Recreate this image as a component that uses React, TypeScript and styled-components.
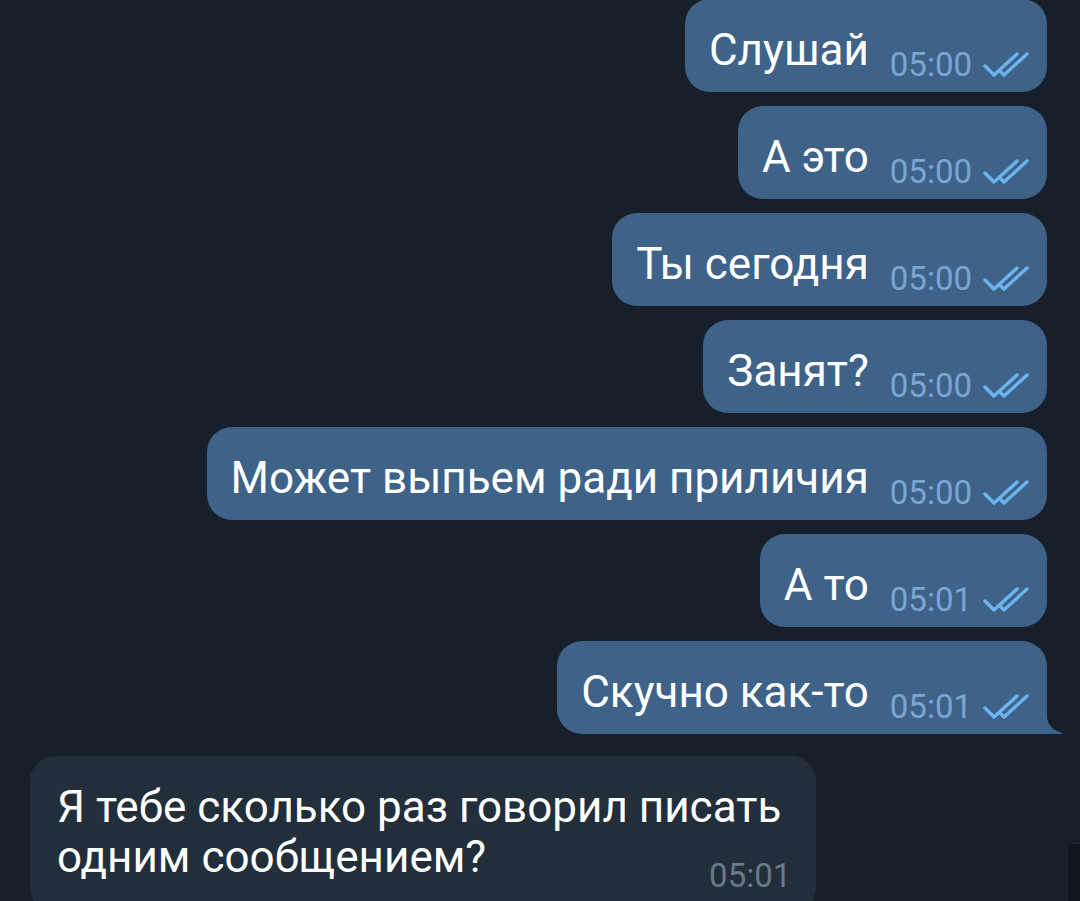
import * as React from 'react'
import styled, { createGlobalStyle } from 'styled-components'

const GlobalStyle = createGlobalStyle`
  html, body {
    margin: 0;
    padding: 0;
    background: #17202a;
  }
  body {
    font-family: Roboto, 'Noto Sans', sans-serif;
  }
`

type Msg = { text: string; time: string }

const outgoing: Msg[] = [
  { text: 'Слушай', time: '05:00' },
  { text: 'А это', time: '05:00' },
  { text: 'Ты сегодня', time: '05:00' },
  { text: 'Занят?', time: '05:00' },
  { text: 'Может выпьем ради приличия', time: '05:00' },
  { text: 'А то', time: '05:01' },
  { text: 'Скучно как-то', time: '05:01' },
]

const DoubleCheck = () => (
  <svg width="48" height="28" viewBox="0 0 48 28" fill="none">
    <polyline
      points="3,15 12,24 35,3"
      stroke="#6cb4ee"
      strokeWidth="3.4"
      strokeLinecap="round"
      strokeLinejoin="round"
    />
    <polyline
      points="18,20 22,24 45,3"
      stroke="#6cb4ee"
      strokeWidth="3.4"
      strokeLinecap="round"
      strokeLinejoin="round"
    />
  </svg>
)

const Tail = () => (
  <TailSvg width="17" height="22" viewBox="0 0 17 22">
    <path d="M0 0 C1 11 5 18 15 20.5 Q17 21.5 15 22 L0 22 Z" fill="#3f6289" />
  </TailSvg>
)

export default function App() {
  return (
    <>
      <GlobalStyle />
      <Screen>
        <List>
          {outgoing.map((m, i) => (
            <OutBubble key={i} last={i === outgoing.length - 1}>
              <Text>{m.text}</Text>
              <Meta>
                <OutTime>{m.time}</OutTime>
                <DoubleCheck />
              </Meta>
              {i === outgoing.length - 1 && <Tail />}
            </OutBubble>
          ))}
          <InBubble>
            <InLine first>Я тебе сколько раз говорил писать</InLine>
            <InLastRow>
              <InLine>одним сообщением?</InLine>
              <InTime>05:01</InTime>
            </InLastRow>
          </InBubble>
        </List>
        <EdgePanel />
      </Screen>
    </>
  )
}

const Screen = styled.div`
  position: relative;
  width: 1080px;
  height: 901px;
  overflow: hidden;
  background: #17202a;
`

const List = styled.div`
  display: flex;
  flex-direction: column;
  align-items: flex-end;
  gap: 14px;
  margin-top: -1px;
  padding-right: 33px;
`

const OutBubble = styled.div<{ last?: boolean }>`
  position: relative;
  display: flex;
  align-items: flex-end;
  padding: 26px 17px 11px 24px;
  background: #3f6289;
  border-radius: 25px;
  border-bottom-right-radius: ${(p) => (p.last ? '0' : '25px')};
  color: #ffffff;
`

const Text = styled.div`
  font-size: 44px;
  line-height: 50px;
  margin-bottom: 6px;
  white-space: nowrap;
`

const Meta = styled.div`
  display: flex;
  align-items: center;
  gap: 10px;
  margin-left: 21px;
  height: 32px;
`

const OutTime = styled.span`
  font-size: 33px;
  line-height: 32px;
  color: #7aa6d4;
`

const TailSvg = styled.svg`
  position: absolute;
  right: -16px;
  bottom: 0;
`

const InBubble = styled.div`
  align-self: flex-start;
  margin-top: 8px;
  margin-left: 30px;
  padding: 26px 25px 20px 27px;
  background: #232e3b;
  border-radius: 25px;
  color: #ffffff;
`

const InLine = styled.div<{ first?: boolean }>`
  font-size: 44px;
  line-height: 50px;
  white-space: nowrap;
  padding-right: ${(p) => (p.first ? '10px' : '0')};
`

const InLastRow = styled.div`
  display: flex;
  justify-content: space-between;
  align-items: flex-start;
`

const InTime = styled.span`
  margin-top: 27px;
  font-size: 33px;
  line-height: 33px;
  color: #6b7a89;
`

const EdgePanel = styled.div`
  position: absolute;
  right: 0;
  top: 843px;
  width: 12px;
  height: 70px;
  background: #11171e;
  border-top: 1px solid #1d2630;
  border-left: 1px solid #1d2630;
  border-top-left-radius: 3px;
`
